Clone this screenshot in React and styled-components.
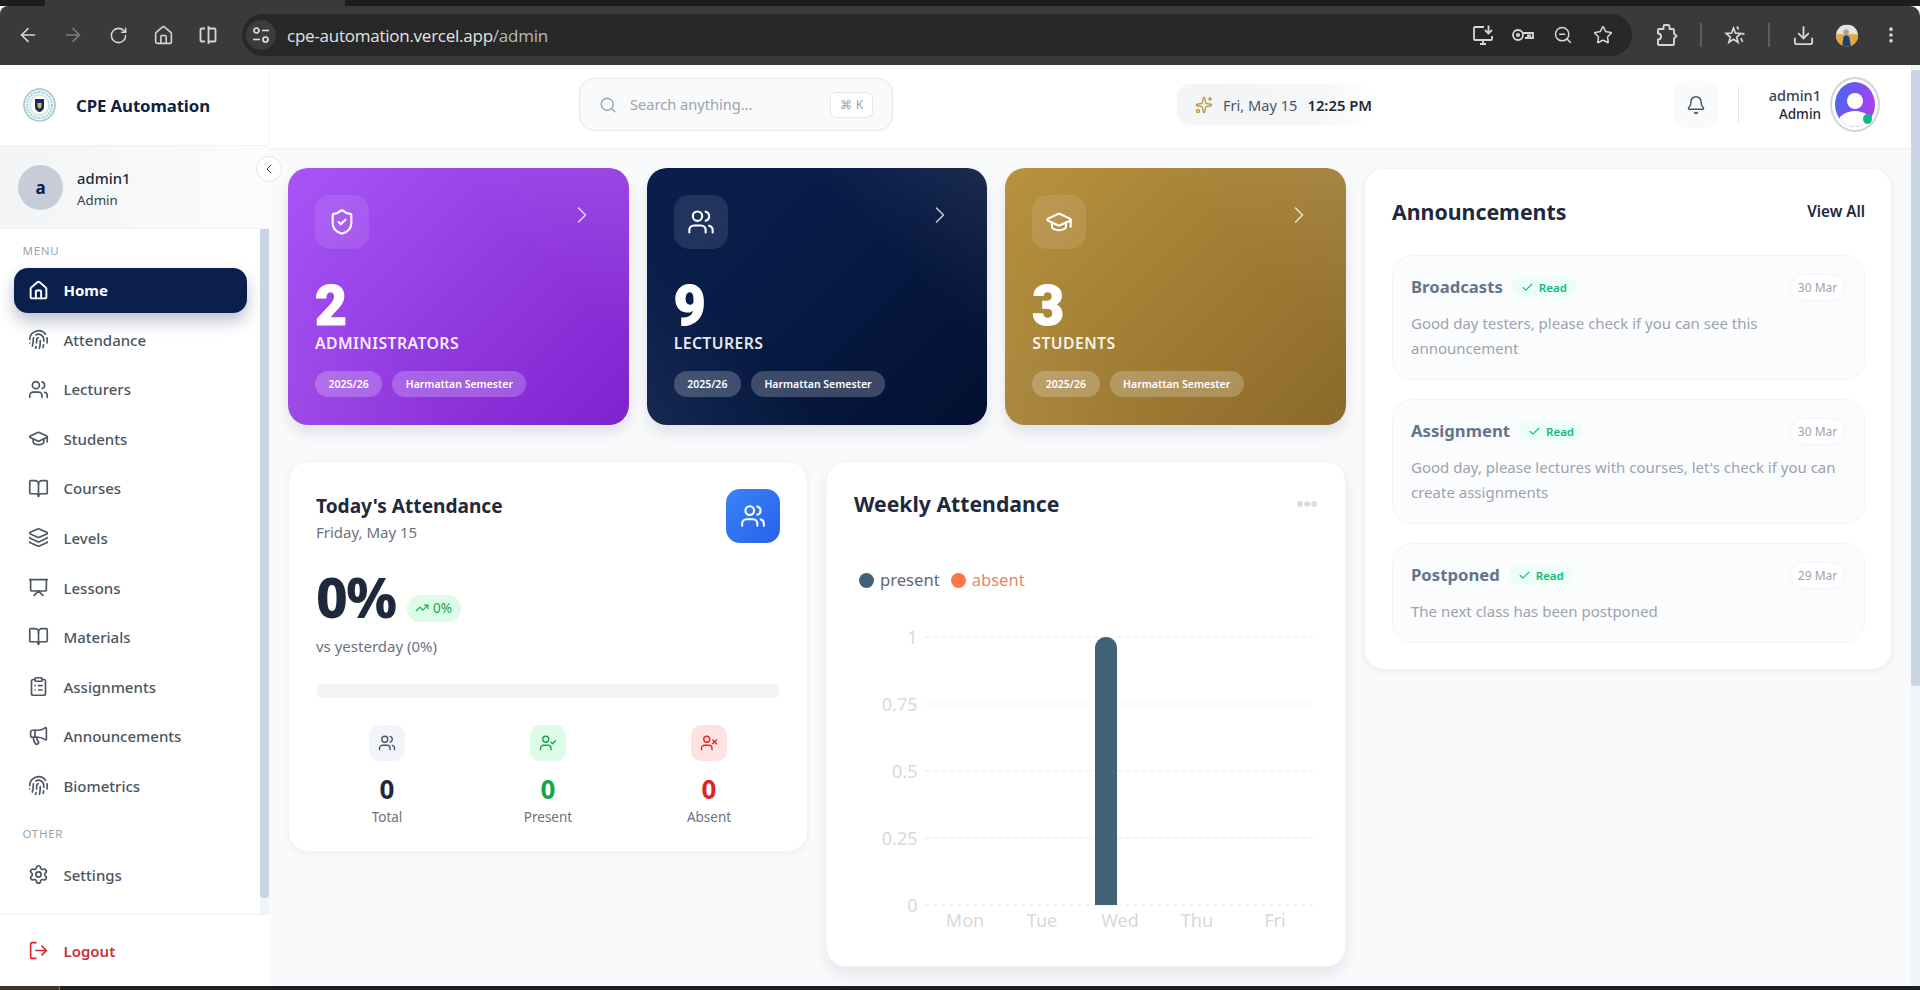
import React from 'react';
import styled, { createGlobalStyle } from 'styled-components';
import {
  ArrowLeft, ArrowRight, RotateCw, House, ZoomOut, Star, Download,
  EllipsisVertical, Fingerprint, Users, GraduationCap, BookOpen, Layers, Presentation, ClipboardList,
  Megaphone, Settings, LogOut, Search, Sparkles, Bell, ShieldCheck, ChevronRight, ChevronLeft,
  TrendingUp, UserCheck, UserX, Check, Ellipsis,
} from 'lucide-react';

const FONT = `"Noto Sans", "Open Sans", Roboto, sans-serif`;

const Global = createGlobalStyle`
  * { box-sizing: border-box; }
  html, body { margin: 0; padding: 0; height: 990px; overflow: hidden; background: #f8fafc; }
  body { font-family: ${FONT}; -webkit-font-smoothing: antialiased; }
  p, h1, h2, h3 { margin: 0; }
`;

const Window = styled.div`
  width: 1920px; height: 990px; display: flex; flex-direction: column; overflow: hidden;
`;

/* browser chrome */
const TabStrip = styled.div`
  height: 5.5px; background: #1d1d1d; flex: none; padding-left: 45px;
`;
const ActiveTab = styled.div`
  width: 300px; height: 100%; background: #3a3a3a;
`;
const Toolbar = styled.div`
  height: 59.5px; flex: none; background: #3a3a3a; display: flex; align-items: center;
  padding-left: 5.5px; border-radius: 8px 10px 0 0;
`;
const ChromeBtn = styled.div`
  width: 45px; height: 36px; display: flex; align-items: center; justify-content: center;
  color: ${p => (p.$dim ? '#7c7c7c' : '#d6d6d6')}; flex: none;
`;
const Omnibox = styled.div`
  width: 1390px; height: 42px; margin-left: 11.5px; margin-right: 13px; border-radius: 21px; background: #282828;
  display: flex; align-items: center; padding-left: 4px; flex: none;
`;
const TuneBadge = styled.div`
  width: 30px; height: 30px; border-radius: 50%; background: #3c3c3c; display: flex;
  align-items: center; justify-content: center; color: #e3e3e3; flex: none;
`;
const Url = styled.div`
  margin-left: 11px; font-size: 17px; color: #e3e3e3; font-family: "Open Sans", sans-serif; letter-spacing: -.25px;
`;
const UrlDim = styled.span` color: #b9b9b9; `;
const OmniIcons = styled.div`
  margin-left: auto; display: flex; padding-right: 9px; color: #d6d6d6;
`;
const OmniIcon = styled.div`
  width: 40px; height: 36px; display: flex; align-items: center; justify-content: center;
`;
const ChromeRule = styled.div`
  width: 2px; height: 24px; background: #5c5c5c; flex: none; margin: ${p => p.$m || '0 22px'};
`;
const ChromeSlot = styled.div`
  width: ${p => p.$w || 36}px; height: 36px; display: flex; align-items: center; justify-content: center;
  color: #d6d6d6; flex: none;
`;
const Taskbar = styled.div`
  height: 4px; flex: none; background: #1f2024; display: flex;
`;
const TaskStart = styled.div` width: 60px; background: #40352c; border-right: 1px solid #777; `;

/* page */
const Body = styled.div`
  flex: 1; min-height: 0; display: flex; background: #f8fafc;
`;
const Sidebar = styled.aside`
  width: 269px; flex: none; background: #fff; display: flex; flex-direction: column; position: relative;
`;
const Brand = styled.div`
  height: 81px; display: flex; align-items: center; padding-left: 23px; gap: 20px; flex: none;
  border-bottom: 1px solid #f1f3f6; border-right: 1px solid #f1f3f6;
`;
const BrandName = styled.div`
  font-size: 16.8px; font-weight: 700; color: #0f1f45; letter-spacing: -.1px;
`;
const UserCard = styled.div`
  height: 83px; flex: none; display: flex; align-items: center; padding-left: 18px; gap: 14px;
  background: linear-gradient(90deg, #f3f4f6, #fbfcfd); border-bottom: 1px solid #f1f3f6;
`;
const Initial = styled.div`
  width: 45px; height: 45px; border-radius: 50%; background: #c7ccd9; color: #0a1f4e; display: flex;
  align-items: center; justify-content: center; font-weight: 700; font-size: 17px;
`;
const UserMeta = styled.div` padding-top: 4px; `;
const UserName = styled.div` font-size: 14.8px; color: #1f2937; line-height: 22px; font-weight: 500; `;
const UserRole = styled.div` font-size: 13.3px; color: #374151; line-height: 22px; `;
const Collapse = styled.button`
  position: absolute; top: 91px; right: -13px; width: 26px; height: 26px; border-radius: 50%; padding: 0;
  background: #fff; border: 1px solid #e5e7eb; color: #374151; display: flex; align-items: center;
  justify-content: center; z-index: 3;
`;
const NavRow = styled.div`
  flex: 1; min-height: 0; display: flex;
`;
const Nav = styled.nav`
  flex: 1; padding: 15px 13px 0 14px; display: flex; flex-direction: column; gap: 4.55px; overflow: hidden;
`;
const NavLabel = styled.div`
  font-size: 11.5px; line-height: 14px; letter-spacing: .7px; color: #9ca3af; padding-left: 8.5px;
  margin: ${p => p.$m};
`;
const NavItem = styled.div`
  height: 45px; flex: none; display: flex; align-items: center; gap: 14.5px; padding-left: 14px; border-radius: 14px;
  font-size: 15px; font-weight: ${p => (p.$active ? 700 : 500)};
  color: ${p => (p.$active ? '#fff' : '#4b5563')};
  background: ${p => (p.$active ? '#0a1f4e' : 'transparent')};
  box-shadow: ${p => (p.$active ? '0 8px 16px rgba(10,31,78,.28)' : 'none')};
`;
const NavText = styled.span` padding-top: .5px; `;
const Track = styled.div`
  width: 9px; flex: none; background: #f1f5f9; 
`;
const Thumb = styled.div`
  background: #c9d4e4; border-radius: 0 0 4px 4px;
`;
const SideFoot = styled.div`
  height: 72px; flex: none; display: flex; align-items: center; padding-left: 28px; gap: 14.5px;
  border-top: 1px solid #f1f3f6; color: #dc2626; font-size: 15px; font-weight: 600;
`;
const LogoutText = styled.span` color: #c8323a; `;

const Main = styled.main`
  flex: 1; min-width: 0; display: flex; flex-direction: column;
`;
const Topbar = styled.header`
  height: 85px; flex: none; background: #fff; border-bottom: 2px solid #f1f3f6; display: flex; align-items: center;
  padding: 0 31px 4px 310px;
`;
const SearchBox = styled.div`
  width: 314px; height: 53px; flex: none; border-radius: 15px; border: 1px solid #e5e7eb; background: #f9fafb;
  display: flex; align-items: center; padding: 0 19px 0 19px; color: #9ca3af; gap: 13px;
`;
const Placeholder = styled.div` font-size: 14.6px; color: #9ca3af; flex: 1; white-space: nowrap; padding-bottom: 1px; `;
const Kbd = styled.div`
  width: 43px; height: 26px; border: 1px solid #e5e7eb; border-radius: 6px; background: #fff; color: #9ca3af;
  font-size: 12px; display: flex; align-items: center; justify-content: center; gap: 4px;
`;
const DatePill = styled.div`
  margin-left: 284px; width: 199px; height: 41px; flex: none; border-radius: 14px;
  background: linear-gradient(90deg, #f3f4f6, #f5f6f8 70%, #fff);
  display: flex; align-items: center; padding-left: 18px; color: #c59b4b; gap: 10px; white-space: nowrap;
`;
const DateText = styled.span` font-size: 14.6px; color: #4b5563; `;
const TimeText = styled.span` font-size: 14.8px; color: #1f2937; font-weight: 600; `;
const BellBox = styled.div`
  margin-left: 297px; width: 46px; height: 47px; flex: none; border-radius: 12px; background: #f9fafb; color: #4b5563;
  display: flex; align-items: center; justify-content: center;
`;
const VRule = styled.div` width: 1px; height: 37px; background: #e5e7eb; margin-left: 19px; flex: none; `;
const WhoText = styled.div` flex: 1; text-align: right; `;
const WhoName = styled.div` font-size: 14.5px; line-height: 19px; color: #374151; font-weight: 500; `;
const WhoRole = styled.div` font-size: 13.5px; line-height: 18px; color: #1f2937; font-weight: 500; `;
const AvatarRing = styled.div`
  width: 50px; height: 55px; flex: none; margin-left: 9px; border-radius: 50%; border: 2px solid #d1d5db;
  position: relative; display: flex; align-items: center; justify-content: center; background: #fff;
`;
const OnlineDot = styled.span`
  position: absolute; right: 6px; bottom: 6px; width: 9px; height: 10px; border-radius: 50%; background: #10b981;
`;

const Scroller = styled.div`
  flex: 1; min-height: 0; padding: 18px 19px 0; display: grid; grid-template-columns: 1058px 528px; gap: 18px;
  align-items: start;
`;
const LeftCol = styled.div` display: flex; flex-direction: column; gap: 36px; `;
const StatRow = styled.div` display: grid; grid-template-columns: repeat(3, 1fr); gap: 18px; `;

const STAT = {
  purple: 'linear-gradient(135deg, #a855f7, #7e22ce)',
  navy: 'linear-gradient(135deg, #0a1f4e, #081b45 45%, #031030)',
  gold: 'linear-gradient(135deg, #b8923f, #8b6a2a)',
};
const StatCard = styled.div`
  height: 257px; border-radius: 20px; padding: 27px; color: #fff; display: flex; flex-direction: column;
  background: linear-gradient(45deg, rgba(255,255,255,.06), transparent 30%, transparent 70%, rgba(255,255,255,.08)), ${p => STAT[p.$tone]};
  box-shadow: 0 8px 14px rgba(15,23,42,.1);
`;
const StatTop = styled.div` display: flex; justify-content: space-between; align-items: flex-start; `;
const StatIcon = styled.div`
  width: 54px; height: 54px; border-radius: 15px; background: rgba(255,255,255,.1); display: flex;
  align-items: center; justify-content: center;
`;
const StatChevron = styled.div`
  margin: 6px 6px 0 0; color: rgba(255,255,255,.75); display: flex;
`;
const StatValue = styled.div`
  margin-top: 30px; font-size: 55px; line-height: 54px; font-weight: 900; font-family: Roboto, sans-serif;
  -webkit-text-stroke: 1.2px #fff;
`;
const StatLabel = styled.div`
  margin-top: -1px; font-size: 15.8px; line-height: 22px; font-weight: 600; letter-spacing: .4px; color: rgba(255,255,255,.92);
`;
const PillRow = styled.div` margin-top: 17px; display: flex; gap: 10px; `;
const Pill = styled.div`
  height: 26px; padding: 0 13.5px; border-radius: 13px; background: rgba(255,255,255,.22); font-size: 10.5px;
  font-weight: 600; display: flex; align-items: center;
`;

const DashRow = styled.div`
  display: grid; grid-template-columns: minmax(0, 1fr) minmax(0, 1fr); gap: 18px; align-items: start;
`;
const Panel = styled.section`
  background: #fff; border-radius: 20px; border: 1px solid #f1f3f6; box-shadow: 0 2px 6px rgba(15,23,42,.05);
`;
const AttendPanel = styled(Panel)` height: 391px; padding: 27px; `;
const AttendHead = styled.div` display: flex; justify-content: space-between; align-items: flex-start; `;
const AttendTitle = styled.h2`
  font-size: 19.1px; line-height: 26px; font-weight: 700; color: #1e293b; margin-top: 4px;
`;
const AttendDate = styled.div` font-size: 15px; line-height: 24px; color: #6b7280; margin-top: 1px; `;
const BlueTile = styled.div`
  width: 54px; height: 54px; border-radius: 14px; background: linear-gradient(135deg, #3b82f6, #2563eb); color: #fff;
  display: flex; align-items: center; justify-content: center;
`;
const RateLine = styled.div` margin-top: 20.6px; display: flex; align-items: flex-end; gap: 11px; `;
const Rate = styled.div`
  font-size: 55px; line-height: 64px; font-weight: 800; color: #1e293b; letter-spacing: -1.5px;
`;
const TrendBadge = styled.div`
  height: 27px; padding: 0 8.5px; border-radius: 14px; background: #dcfce7; color: #16a34a; font-size: 13.5px;
  display: flex; align-items: center; gap: 4px; margin-bottom: 7px;
`;
const Versus = styled.div` margin-top: 5.3px; font-size: 15px; line-height: 24px; color: #6b7280; `;
const BarTrack = styled.div` margin-top: 26.3px; height: 14px; border-radius: 7px; background: #f3f4f6; `;
const TriGrid = styled.div` margin-top: 27px; display: grid; grid-template-columns: repeat(3, 1fr); gap: 19px; `;
const Tri = styled.div` display: flex; flex-direction: column; align-items: center; `;
const TONES = {
  slate: ['#f1f5f9', '#475569', '#1e293b'],
  green: ['#dcfce7', '#16a34a', '#16a34a'],
  red: ['#fee2e2', '#dc2626', '#dc2626'],
};
const TriIcon = styled.div`
  width: 36px; height: 36px; border-radius: 10px; display: flex; align-items: center; justify-content: center;
  background: ${p => TONES[p.$tone][0]}; color: ${p => TONES[p.$tone][1]};
`;
const TriValue = styled.div`
  margin-top: 11px; font-size: 26px; line-height: 34px; font-weight: 700; color: ${p => TONES[p.$tone][2]};
`;
const TriLabel = styled.div` margin-top: 1px; font-size: 13.5px; line-height: 20px; color: #6b7280; `;

const WeekPanel = styled(Panel)`
  height: 506px; padding: 27px; box-shadow: 0 8px 16px rgba(15,23,42,.08);
`;
const WeekHead = styled.div` display: flex; justify-content: space-between; align-items: center; `;
const WeekTitle = styled.h2` font-size: 21.2px; line-height: 30px; font-weight: 700; color: #1e293b; `;
const MoreDots = styled.div` color: #d1d5db; display: flex; margin-right: -1px; `;
const Legend = styled.div` margin-top: 49px; padding-left: 5px; display: flex; align-items: center; font-size: 16.6px; line-height: 24px; `;
const LegendDot = styled.span`
  width: 15px; height: 15px; border-radius: 50%; background: ${p => p.$c}; margin: ${p => p.$m}; flex: none;
`;
const LegendText = styled.span` color: ${p => p.$c}; margin-left: 6px; `;
const ChartSvg = styled.svg` display: block; margin-top: 32px; `;

const NewsPanel = styled(Panel)` padding: 25px 26px 27px 27px; height: 502px; `;
const NewsHead = styled.div` display: flex; justify-content: space-between; align-items: center; height: 34px; `;
const NewsTitle = styled.h2` font-size: 21.3px; font-weight: 700; color: #1e293b; `;
const ViewAll = styled.div` font-size: 15.2px; font-weight: 600; color: #1e293b; `;
const NewsList = styled.div` margin-top: 27px; display: flex; flex-direction: column; gap: 19px; `;
const NewsItem = styled.article`
  height: ${p => p.$h}px; border-radius: 20px; background: #fbfcfd; border: 1px solid #f3f4f6; padding: 17px 19px 0 18px;
`;
const NewsTop = styled.div` display: flex; align-items: center; `;
const NewsName = styled.h3` font-size: 16.7px; line-height: 28px; font-weight: 700; color: #64748b; `;
const ReadTag = styled.div`
  margin-left: 9px; height: 20px; padding: 0 9px; border-radius: 10px; background: #ecfdf5; color: #10b981;
  font-size: 11.5px; font-weight: 600; display: flex; align-items: center; gap: 5px;
`;
const WhenTag = styled.div`
  margin-left: auto; width: 55px; height: 27px; border-radius: 14px; background: #fff; border: 1px solid #f3f4f6;
  color: #9ca3af; font-size: 12px; display: flex; align-items: center; justify-content: center;
`;
const NewsBody = styled.p` margin-top: 10px; font-size: 15px; line-height: 25px; color: #9ca3af; `;

const Spine = styled.div` width: 9px; flex: none; background: #f1f5f9; `;
const SpineThumb = styled.div` margin-top: 5px; height: 616px; background: #c9d4e4; border-radius: 2px; `;

/* drawings */
const Seal = () => (
  <svg width="33" height="34" viewBox="0 0 33 34" aria-hidden="true">
    <ellipse cx="16.5" cy="17" rx="15.5" ry="16" fill="#eef6f7" stroke="#9cc9cf" strokeWidth="1.6" />
    <ellipse cx="16.5" cy="17" rx="12.5" ry="13" fill="none" stroke="#a8cdd6" strokeWidth="2" strokeDasharray="1.6 1.2" />
    <ellipse cx="16.5" cy="17" rx="9.5" ry="10" fill="#fff" stroke="#b9d7dd" strokeWidth="1" />
    <path d="M12 11h9v8c0 2.8-2.3 4.4-4.5 5.2-2.2-.8-4.5-2.4-4.5-5.2z" fill="#1d2a5e" />
    <path d="M14.5 15h4v4l-2 1.8-2-1.8z" fill="#d9b44a" />
  </svg>
);
const Tune = () => (
  <svg width="18" height="18" viewBox="0 0 18 18" fill="none" stroke="currentColor" strokeWidth="1.7" aria-hidden="true">
    <circle cx="4.5" cy="4.5" r="2.5" /><path d="M10 4.5h7M1 13.5h7" /><circle cx="13.5" cy="13.5" r="2.5" />
  </svg>
);
const SplitView = () => (
  <svg width="20" height="20" viewBox="0 0 20 20" fill="none" stroke="currentColor" strokeWidth="1.8" aria-hidden="true">
    <path d="M7 3.5H3.5a1 1 0 0 0-1 1v11a1 1 0 0 0 1 1H7M10.5 1v18M10.5 3.5h6a1 1 0 0 1 1 1v11a1 1 0 0 1-1 1h-6" />
  </svg>
);
const InstallIcon = () => (
  <svg width="22" height="22" viewBox="0 0 22 22" fill="none" stroke="currentColor" strokeWidth="1.8" aria-hidden="true">
    <path d="M12 3H3a1 1 0 0 0-1 1v11a1 1 0 0 0 1 1h16a1 1 0 0 0 1-1v-3" />
    <path d="M8 20h6M11 16v4M16.5 1.5v7.5M13 6l3.5 3.5L20 6" />
  </svg>
);
const KeyIcon = () => (
  <svg width="24" height="20" viewBox="0 0 24 20" fill="none" stroke="currentColor" strokeWidth="1.8" aria-hidden="true">
    <circle cx="7" cy="10" r="5" /><circle cx="7" cy="10" r="1.2" />
    <path d="M12 8h10v5h-3v-2.5h-2V13h-3M12 11.5" />
  </svg>
);
const ExtIcon = () => (
  <svg width="22" height="24" viewBox="0 0 22 24" fill="none" stroke="currentColor" strokeWidth="1.9" strokeLinejoin="round" aria-hidden="true">
    <path d="M3 6h4.5V3.5a1.5 1.5 0 0 1 1.5-1.5h3a1.5 1.5 0 0 1 1.5 1.5V6H17a1 1 0 0 1 1 1v3.5l2.5 2.5-2.5 2.5V21a1 1 0 0 1-1 1H3a1 1 0 0 1-1-1v-4.5c2 0 3-1.3 3-3s-1-3-3-3V7a1 1 0 0 1 1-1z" />
  </svg>
);
const StarList = () => (
  <svg width="22" height="22" viewBox="0 0 22 22" fill="none" stroke="currentColor" strokeWidth="1.7" aria-hidden="true">
    <path d="M9.5 4l2 5.2 5.4.3-4.2 3.5 1.4 5.3-4.6-3-4.6 3 1.4-5.3L2.1 9.5l5.4-.3z" />
    <path d="M13 2.5l1.5 3M18 10.5l2.5-1M17 14l1.5 4" />
  </svg>
);
const ProfilePhoto = () => (
  <svg width="25" height="25" viewBox="0 0 25 25" aria-hidden="true">
    <defs><clipPath id="pf"><circle cx="12.5" cy="12.5" r="12.5" /></clipPath></defs>
    <g clipPath="url(#pf)">
      <rect width="25" height="25" fill="#dfe6e6" />
      <rect y="11" width="25" height="14" fill="#e0a83f" />
      <circle cx="11.5" cy="8.5" r="3.2" fill="#a9a29a" />
      <path d="M7 25l1.5-11c1-2 5-2 6.5 0L17 25z" fill="#1f3f78" />
    </g>
  </svg>
);
const AvatarArt = () => (
  <svg width="40" height="45" viewBox="0 0 40 45" aria-hidden="true">
    <defs>
      <linearGradient id="av" x1="0" x2="1" y1="0" y2="0.3"><stop offset="0" stopColor="#3b6cf0" /><stop offset="1" stopColor="#a83ff0" /></linearGradient>
      <clipPath id="avc"><ellipse cx="20" cy="22.5" rx="20" ry="22.5" /></clipPath>
    </defs>
    <ellipse cx="20" cy="22.5" rx="20" ry="22.5" fill="url(#av)" />
    <g clipPath="url(#avc)">
      <circle cx="20" cy="19" r="8" fill="#fff" />
      <ellipse cx="20" cy="41" rx="17" ry="12" fill="#fff" />
    </g>
  </svg>
);

const MENU = [
  ['Home', House], ['Attendance', Fingerprint], ['Lecturers', Users], ['Students', GraduationCap],
  ['Courses', BookOpen], ['Levels', Layers], ['Lessons', Presentation], ['Materials', BookOpen],
  ['Assignments', ClipboardList], ['Announcements', Megaphone], ['Biometrics', Fingerprint],
];
const STATS = [
  { tone: 'purple', value: 2, label: 'ADMINISTRATORS', Icon: ShieldCheck },
  { tone: 'navy', value: 9, label: 'LECTURERS', Icon: Users },
  { tone: 'gold', value: 3, label: 'STUDENTS', Icon: GraduationCap },
];
const NEWS = [
  { name: 'Broadcasts', when: '30 Mar', h: 125, body: 'Good day testers, please check if you can see this announcement' },
  { name: 'Assignment', when: '30 Mar', h: 125, body: "Good day, please lectures with courses, let's check if you can create assignments" },
  { name: 'Postponed', when: '29 Mar', h: 100, body: 'The next class has been postponed' },
];
const GRID = [[13, '1'], [80, '0.75'], [147, '0.5'], [214, '0.25'], [281, '0']];
const DAYS = [[111, 'Mon'], [188, 'Tue'], [266, 'Wed'], [343, 'Thu'], [421, 'Fri']];

export default function App() {
  return (
    <Window>
      <Global />
      <TabStrip><ActiveTab /></TabStrip>
      <Toolbar>
        <ChromeBtn><ArrowLeft size={22} strokeWidth={1.8} /></ChromeBtn>
        <ChromeBtn $dim><ArrowRight size={22} strokeWidth={1.8} /></ChromeBtn>
        <ChromeBtn><RotateCw size={19} strokeWidth={1.9} /></ChromeBtn>
        <ChromeBtn><House size={21} strokeWidth={1.8} /></ChromeBtn>
        <ChromeBtn><SplitView /></ChromeBtn>
        <Omnibox>
          <TuneBadge><Tune /></TuneBadge>
          <Url>cpe-automation.vercel.app<UrlDim>/admin</UrlDim></Url>
          <OmniIcons>
            <OmniIcon><InstallIcon /></OmniIcon>
            <OmniIcon><KeyIcon /></OmniIcon>
            <OmniIcon><ZoomOut size={20} strokeWidth={1.8} /></OmniIcon>
            <OmniIcon><Star size={20} strokeWidth={1.8} /></OmniIcon>
          </OmniIcons>
        </Omnibox>
        <ChromeSlot $w={44}><ExtIcon /></ChromeSlot>
        <ChromeRule $m="0 0 0 11px" />
        <ChromeSlot $w={66}><StarList /></ChromeSlot>
        <ChromeRule $m="0" />
        <ChromeSlot $w={66}><Download size={23} strokeWidth={1.9} /></ChromeSlot>
        <ChromeSlot $w={22}><ProfilePhoto /></ChromeSlot>
        <ChromeSlot $w={66}><EllipsisVertical size={20} strokeWidth={2.4} /></ChromeSlot>
      </Toolbar>

      <Body>
        <Sidebar>
          <Brand><Seal /><BrandName>CPE Automation</BrandName></Brand>
          <UserCard>
            <Initial>a</Initial>
            <UserMeta><UserName>admin1</UserName><UserRole>Admin</UserRole></UserMeta>
          </UserCard>
          <Collapse aria-label="Collapse"><ChevronLeft size={16} strokeWidth={1.5} /></Collapse>
          <NavRow>
            <Nav>
              <NavLabel $m="0 0 5px">MENU</NavLabel>
              {MENU.map(([label, Icon]) => (
                <NavItem key={label} $active={label === 'Home'}>
                  <Icon size={21} strokeWidth={label === 'Home' ? 2.2 : 1.9} /><NavText>{label}</NavText>
                </NavItem>
              ))}
              <NavLabel $m="14px 0 7px">OTHER</NavLabel>
              <NavItem><Settings size={21} strokeWidth={1.9} /><NavText>Settings</NavText></NavItem>
            </Nav>
            <Track><Thumb style={{ height: 669 }} /></Track>
          </NavRow>
          <SideFoot><LogOut size={21} strokeWidth={1.9} /><LogoutText>Logout</LogoutText></SideFoot>
        </Sidebar>

        <Main>
          <Topbar>
            <SearchBox>
              <Search size={18} strokeWidth={1.8} />
              <Placeholder>Search anything...</Placeholder>
              <Kbd><span>⌘</span><span>K</span></Kbd>
            </SearchBox>
            <DatePill>
              <Sparkles size={18} strokeWidth={1.9} />
              <DateText>Fri, May 15</DateText>
              <TimeText>12:25 PM</TimeText>
            </DatePill>
            <BellBox><Bell size={20} strokeWidth={1.8} /></BellBox>
            <VRule />
            <WhoText><WhoName>admin1</WhoName><WhoRole>Admin</WhoRole></WhoText>
            <AvatarRing><AvatarArt /><OnlineDot /></AvatarRing>
          </Topbar>
          <Scroller>
            <LeftCol>
              <StatRow>
                {STATS.map(({ tone, value, label, Icon }) => (
                  <StatCard key={tone} $tone={tone}>
                    <StatTop>
                      <StatIcon><Icon size={28} strokeWidth={1.8} /></StatIcon>
                      <StatChevron><ChevronRight size={28} strokeWidth={1.4} /></StatChevron>
                    </StatTop>
                    <StatValue>{value}</StatValue>
                    <StatLabel>{label}</StatLabel>
                    <PillRow><Pill>2025/26</Pill><Pill>Harmattan Semester</Pill></PillRow>
                  </StatCard>
                ))}
              </StatRow>
              <DashRow>
                <AttendPanel>
                  <AttendHead>
                    <div>
                      <AttendTitle>Today's Attendance</AttendTitle>
                      <AttendDate>Friday, May 15</AttendDate>
                    </div>
                    <BlueTile><Users size={26} strokeWidth={1.9} /></BlueTile>
                  </AttendHead>
                  <RateLine>
                    <Rate>0%</Rate>
                    <TrendBadge><TrendingUp size={14} strokeWidth={2} />0%</TrendBadge>
                  </RateLine>
                  <Versus>vs yesterday (0%)</Versus>
                  <BarTrack />
                  <TriGrid>
                    <Tri><TriIcon $tone="slate"><Users size={18} strokeWidth={1.8} /></TriIcon><TriValue $tone="slate">0</TriValue><TriLabel>Total</TriLabel></Tri>
                    <Tri><TriIcon $tone="green"><UserCheck size={18} strokeWidth={1.8} /></TriIcon><TriValue $tone="green">0</TriValue><TriLabel>Present</TriLabel></Tri>
                    <Tri><TriIcon $tone="red"><UserX size={18} strokeWidth={1.8} /></TriIcon><TriValue $tone="red">0</TriValue><TriLabel>Absent</TriLabel></Tri>
                  </TriGrid>
                </AttendPanel>
                <WeekPanel>
                  <WeekHead>
                    <WeekTitle>Weekly Attendance</WeekTitle>
                    <MoreDots><Ellipsis size={24} strokeWidth={3.6} /></MoreDots>
                  </WeekHead>
                  <Legend>
                    <LegendDot $c="#426277" $m="0" /><LegendText $c="#5b6b78">present</LegendText>
                    <LegendDot $c="#ff7744" $m="0 0 0 11px" /><LegendText $c="#e08a6c">absent</LegendText>
                  </Legend>
                  <ChartSvg width="464" height="310" viewBox="0 0 464 310" fontFamily={FONT} fontSize="18" fill="#d6d9de">
                    {GRID.map(([y, t]) => (
                      <g key={t}>
                        <line x1="71" x2="462" y1={y} y2={y} stroke="#e5e7eb" strokeDasharray="4 4" />
                        <text x="63.5" y={y + 6.5} textAnchor="end">{t}</text>
                      </g>
                    ))}
                    <path d="M241 281V24a11 11 0 0 1 22 0V281z" fill="#426277" />
                    {DAYS.map(([x, t]) => (
                      <text key={t} x={x} y="303" textAnchor="middle">{t}</text>
                    ))}
                  </ChartSvg>
                </WeekPanel>
              </DashRow>
            </LeftCol>
            <NewsPanel>
              <NewsHead><NewsTitle>Announcements</NewsTitle><ViewAll>View All</ViewAll></NewsHead>
              <NewsList>
                {NEWS.map(n => (
                  <NewsItem key={n.name} $h={n.h}>
                    <NewsTop>
                      <NewsName>{n.name}</NewsName>
                      <ReadTag><Check size={13} strokeWidth={2} />Read</ReadTag>
                      <WhenTag>{n.when}</WhenTag>
                    </NewsTop>
                    <NewsBody>{n.body}</NewsBody>
                  </NewsItem>
                ))}
              </NewsList>
            </NewsPanel>
          </Scroller>
        </Main>
        <Spine><SpineThumb /></Spine>
      </Body>
      <Taskbar><TaskStart /></Taskbar>
    </Window>
  );
}
